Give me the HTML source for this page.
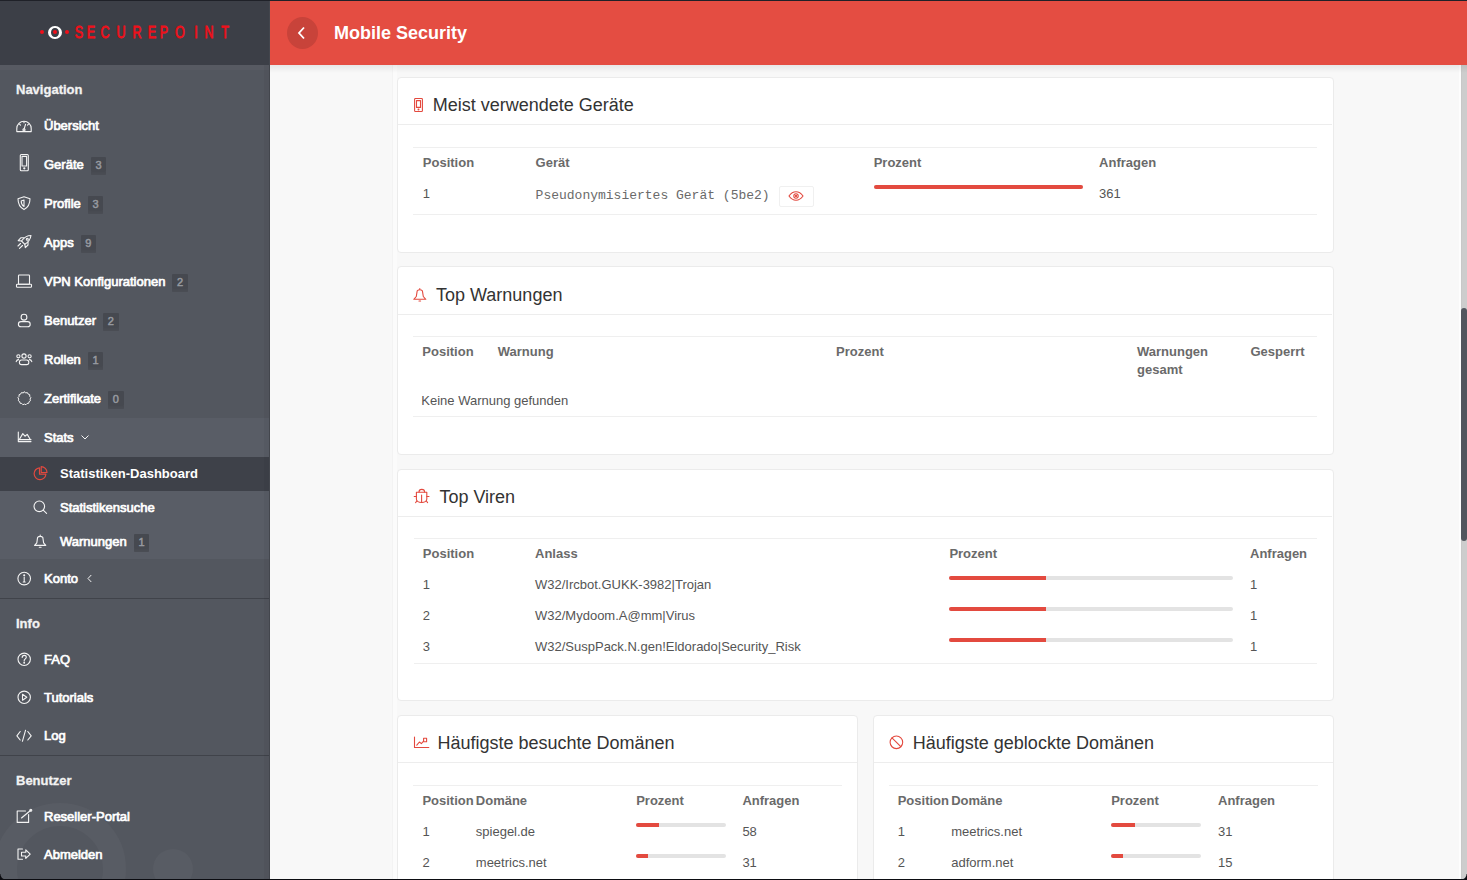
<!DOCTYPE html>
<html><head><meta charset="utf-8"><style>*{box-sizing:border-box;margin:0;padding:0}
html,body{width:1467px;height:880px;overflow:hidden;background:#f8f8f8;font-family:"Liberation Sans",sans-serif}
.abs{position:absolute}
#sb{position:absolute;left:0;top:0;width:270px;height:880px;background:#53575f;overflow:hidden}
#logo{position:absolute;left:0;top:0;width:270px;height:65px;background:#3c3f47}
.lg{position:absolute;top:21.7px;width:30px;text-align:center;font-family:"Liberation Sans",sans-serif;font-size:17px;line-height:22px;color:#f0101a;transform:scaleX(0.74);-webkit-text-stroke:0.8px #f0101a}
.h{position:absolute;left:16px;color:#f2f2f2;font-weight:bold;font-size:13px;line-height:16px;-webkit-text-stroke:0.3px #f2f2f2}
.it{position:absolute;left:0;width:270px;height:39px}
.it .t{position:absolute;left:44px;top:0;line-height:39px;font-size:13px;color:#fff;-webkit-text-stroke:0.7px #fff;white-space:nowrap}
.bd{display:inline-block;vertical-align:top;margin-left:7px;margin-top:11.5px;width:15.5px;height:18px;background:#464950;color:#979aa0;font-size:11px;line-height:17px;text-align:center;-webkit-text-stroke:0.5px #979aa0;border-radius:1px;box-shadow:inset 0 -3px 2px rgba(255,255,255,0.025)}
.sub{position:absolute;left:0;width:270px;height:34px}
.sub .t{position:absolute;left:60px;top:0;line-height:34px;font-size:13px;color:#fff;-webkit-text-stroke:0.7px #fff;white-space:nowrap}
.sub .bd{margin-top:8.5px}
.sub.act .t{font-weight:bold;-webkit-text-stroke:0}
.sep{position:absolute;left:0;width:270px;height:1px;background:#40434a}
#hdr{position:absolute;left:270px;top:0;width:1197px;height:65px;background:#e44d42;z-index:5}
#shd{position:absolute;left:270px;top:65px;width:1197px;height:8px;background:linear-gradient(rgba(0,0,0,0.07),rgba(0,0,0,0));z-index:4}
#top{position:absolute;left:0;top:0;width:1467px;height:1px;background:#1f2128;z-index:20}
#bot{position:absolute;left:0;top:879px;width:1467px;height:1px;background:#0c0d12;z-index:20}
.crn{position:absolute;width:6px;height:6px;z-index:20}
.card{position:absolute;background:#fff;border:1px solid #ebebeb;border-radius:4px}
.ch{position:absolute;left:0;top:0;right:0;height:47px;border-bottom:1px solid #ececec}
.ct{position:absolute;top:16px;font-size:18px;line-height:22px;color:#333;white-space:nowrap}
.tl{position:absolute;height:1px;background:#efefef}
.th{position:absolute;font-size:13px;font-weight:bold;color:#6a6a6a;line-height:18px;white-space:nowrap}
.td{position:absolute;font-size:13px;color:#555;line-height:18px;white-space:nowrap}
.mono{font-family:"Liberation Mono",monospace;color:#6a6a6a}
.bar{position:absolute;height:4px;background:#e3e3e3;border-radius:2px;overflow:hidden}
.bar i{position:absolute;left:0;top:0;height:4px;background:#e34a3f}
.hl{position:absolute;height:1px;background:#ededed}
</style></head><body>
<div id="top"></div><div id="bot"></div><div class="crn" style="left:0;top:874px;background:radial-gradient(circle at 6px 0,rgba(12,13,18,0) 5px,#0c0d12 6px)"></div><div class="crn" style="left:1461px;top:874px;background:radial-gradient(circle at 0 0,rgba(12,13,18,0) 5px,#0c0d12 6px)"></div>
<div id="sb"><div id="logo"><div class="abs" style="left:40px;top:30px;width:4px;height:4px;border-radius:2px;background:#f0101a"></div><div class="abs" style="left:48px;top:25.5px;width:14px;height:13.5px;border-radius:50%;border:2px solid #fff;border-left-width:3.2px;border-right-width:3.2px"></div><div class="abs" style="left:53px;top:30px;width:4px;height:4px;border-radius:2px;background:#f0101a"></div><div class="abs" style="left:65px;top:30px;width:4px;height:4px;border-radius:2px;background:#f0101a"></div><div class="lg" style="left:63.599999999999994px">S</div><div class="lg" style="left:76.2px">E</div><div class="lg" style="left:90.1px">C</div><div class="lg" style="left:105.5px">U</div><div class="lg" style="left:122.30000000000001px">R</div><div class="lg" style="left:137px">E</div><div class="lg" style="left:148.8px">P</div><div class="lg" style="left:165px">O</div><div class="lg" style="left:181px">I</div><div class="lg" style="left:194px">N</div><div class="lg" style="left:209.7px">T</div></div><div class="h" style="top:82px">Navigation</div><div class="it" style="top:106.2px"><span class="t">Übersicht</span></div><div class="it" style="top:145.2px"><span class="t">Geräte<span class="bd">3</span></span></div><div class="it" style="top:184.2px"><span class="t">Profile<span class="bd">3</span></span></div><div class="it" style="top:223.2px"><span class="t">Apps<span class="bd">9</span></span></div><div class="it" style="top:262.2px"><span class="t">VPN Konfigurationen<span class="bd">2</span></span></div><div class="it" style="top:301.2px"><span class="t">Benutzer<span class="bd">2</span></span></div><div class="it" style="top:340.2px"><span class="t">Rollen<span class="bd">1</span></span></div><div class="it" style="top:379.2px"><span class="t">Zertifikate<span class="bd">0</span></span></div><div class="abs" style="left:0;top:418.2px;width:270px;height:141px;background:#595d66"></div><div class="it" style="top:418.2px"><span class="t">Stats</span></div><div class="abs" style="left:0;top:457.2px;width:270px;height:34px;background:#3e4149"></div><div class="sub act" style="top:457.2px"><span class="t">Statistiken-Dashboard</span></div><div class="sub" style="top:491.2px"><span class="t">Statistikensuche</span></div><div class="sub" style="top:525.2px"><span class="t">Warnungen<span class="bd">1</span></span></div><div class="it" style="top:559.2px"><span class="t">Konto</span></div><div class="sep" style="top:598.2px"></div><div class="h" style="top:615.5px">Info</div><div class="it" style="top:639.6px"><span class="t">FAQ</span></div><div class="it" style="top:677.8000000000001px"><span class="t">Tutorials</span></div><div class="it" style="top:716.0px"><span class="t">Log</span></div><div class="sep" style="top:755px"></div><div class="h" style="top:772.5px">Benutzer</div><div class="it" style="top:797.0px"><span class="t">Reseller-Portal</span></div><div class="it" style="top:835.2px"><span class="t">Abmelden</span></div><div class="abs" style="left:-6px;top:803px;width:132px;height:132px;border-radius:50%;border:23px solid rgba(255,255,255,0.03)"></div><div class="abs" style="left:153px;top:849px;width:40px;height:40px;border-radius:50%;background:rgba(255,255,255,0.03)"></div><div class="abs" style="left:0;top:65px;width:270px;height:5px;background:rgba(255,255,255,0.025)"></div><div class="abs" style="left:264px;top:65px;width:5px;height:815px;background:rgba(0,0,0,0.035)"></div><svg class="abs" style="left:0;top:0" width="270" height="880" viewBox="0 0 270 880" fill="none" stroke="#f4f4f4" stroke-width="1.1" stroke-linejoin="round" stroke-linecap="round">
<path d="M16.8 131.6 L16.8 128.4 A7.2 7.2 0 0 1 31.2 128.4 L31.2 131.6 Z"/>
<path d="M24 129.5 L25.6 124.2"/><circle cx="24" cy="129.8" r="1.1"/>
<path d="M19.5 124.2 L20.5 125.2 M28.5 124.2 L27.5 125.2 M24 121.5 L24 122.8"/>
<rect x="20.3" y="154.5" width="8" height="16.3" rx="1"/>
<rect x="22" y="156.4" width="4.6" height="9.6"/><circle cx="24.3" cy="168.3" r="0.6"/>
<path d="M24 196.8 L30 198.8 C30 204.5 27.5 207.8 24 209.6 C20.5 207.8 18 204.5 18 198.8 Z"/>
<path d="M24 200 L24 206.5 C22.3 205.5 21.2 203.5 21.2 201 Z"/>
<path d="M31 235.5 C27 235.5 24 237.5 21.5 241 L24.8 244.3 C28.5 242 30.5 239 31 235.5 Z"/>
<path d="M21.5 241 L18.2 240.6 L20.8 237.8 L24 237.8 M24.8 244.3 L25.3 247.6 L28 245 L28 242"/>
<path d="M20.5 243.5 L18 246 M22.5 245.5 L19.5 248.3"/><circle cx="27.3" cy="239.2" r="1"/>
<rect x="18.5" y="275" width="11" height="9.3" rx="0.8"/>
<rect x="16.5" y="284.3" width="15" height="3" rx="0.8"/>
<circle cx="24" cy="317.2" r="2.9"/>
<rect x="18.4" y="321.6" width="11.8" height="5.2" rx="2.6"/>
<circle cx="24" cy="356" r="2.1"/><circle cx="18.4" cy="356.3" r="1.6"/><circle cx="29.6" cy="356.3" r="1.6"/>
<rect x="19.4" y="360" width="9.4" height="4.6" rx="2.2"/>
<path d="M16.2 361.6 C16.6 360.2 17.4 359.6 18.6 359.6 M31.8 361.6 C31.4 360.2 30.6 359.6 29.4 359.6"/>
<path d="M24.40 391.90 L25.76 392.87 L27.42 392.64 L28.18 394.13 L29.75 394.71 L29.73 396.38 L30.85 397.62 L30.06 399.09 L30.48 400.70 L29.09 401.64 L28.71 403.27 L27.05 403.45 L25.96 404.71 L24.40 404.10 L22.84 404.71 L21.75 403.45 L20.09 403.27 L19.71 401.64 L18.32 400.70 L18.74 399.09 L17.95 397.62 L19.07 396.38 L19.05 394.71 L20.62 394.13 L21.38 392.64 L23.04 392.87 Z" stroke-width="1"/>
<path d="M18.3 432 L18.3 441.6 L31 441.6 M18.3 439.6 L31 439.6"/><path d="M19.6 439 L22.8 433.6 L25 436.2 L27.2 434.4 L30 439"/>
<path d="M81.8 435.8 L85 439 L88.2 435.8" stroke-width="1"/><path d="M91 575.3 L88 578.5 L91 581.7" stroke-width="1"/>
<g stroke="#e2493f" stroke-width="1.2"><path d="M39.5 467.8 A5.9 5.9 0 1 0 45.9 474.2 L39.5 474.2 Z"/><path d="M41.2 466.7 A5.8 5.8 0 0 1 47 472.5 L41.2 472.5 Z"/></g>
<circle cx="39.3" cy="506.3" r="5.3"/><path d="M43.2 510.2 L46.6 513.4"/>
<path d="M40.2 535 L40.2 535.8 M37.6 537.4 C38.4 536.6 39.4 536.4 40.2 536.4 C41 536.4 42 536.6 42.8 537.4 L43.6 542.8 L45.8 545.4 L34.6 545.4 L36.8 542.8 Z"/><path d="M39.3 547.2 L41.1 547.2"/>
<circle cx="24.2" cy="578.6" r="6.3"/><path d="M24.2 577 L24.2 582 M23.2 582 L25.2 582"/><circle cx="24.2" cy="575.2" r="0.5"/>
<circle cx="24.2" cy="659.3" r="6.2"/><path d="M22.2 657.5 C22.2 656 23 655.4 24.2 655.4 C25.5 655.4 26.3 656.2 26.3 657.3 C26.3 658.8 24.2 659 24.2 660.6 L24.2 661"/><circle cx="24.2" cy="662.8" r="0.4"/>
<circle cx="24.2" cy="697.3" r="6.2"/><path d="M22.5 694.3 L22.5 700.3 L26.8 697.3 Z"/>
<path d="M20.2 731.5 L16.9 735.8 L20.2 740 M27.8 731.5 L31.2 735.8 L27.8 740 M25.6 730.2 L22.4 741.3"/>
<path d="M25.5 811 L17.2 811 L17.2 822.4 L28.6 822.4 L28.6 814.5"/><path d="M21.5 818 L30.5 810.5"/><circle cx="30.8" cy="810.3" r="1"/>
<path d="M22.5 849 L18 849 L18 859.2 L22.5 859.2"/><path d="M21.5 852.2 L25.8 852.2 L25.8 849.8 L30.2 854.1 L25.8 858.4 L25.8 856 L21.5 856 Z"/>
</svg>
</div>
<div id="hdr"><div class="abs" style="left:16.5px;top:17px;width:31px;height:32px;border-radius:50%;background:#c8433a"></div><svg class="abs" style="left:26px;top:25px" width="12" height="16" viewBox="0 0 12 16"><path d="M8 2.5 L3 8 L8 13.5" fill="none" stroke="#fff" stroke-width="1.8"/></svg><div class="abs" style="left:64px;top:22px;font-size:18px;line-height:22px;font-weight:bold;color:#fff">Mobile Security</div></div>
<div id="shd"></div>
<div class="abs" style="left:269px;top:0;width:1px;height:880px;background:#43464d;z-index:6"></div>
<div class="card" style="left:397px;top:77px;width:937px;height:176px"></div>
<div class="hl" style="left:398px;top:124px;width:934px"></div>
<div class="ct" style="left:432.7px;top:93.5px">Meist verwendete Geräte</div>
<div class="tl" style="left:413px;top:146.5px;width:904px"></div>
<div class="th" style="left:422.8px;top:154.1px">Position</div>
<div class="th" style="left:535.6px;top:154.1px">Gerät</div>
<div class="th" style="left:873.7px;top:154.1px">Prozent</div>
<div class="th" style="left:1099.1px;top:154.1px">Anfragen</div>
<div class="td" style="left:422.8px;top:185.1px">1</div>
<div class="td mono" style="left:535.6px;top:187.1px">Pseudonymisiertes Gerät (5be2)</div>
<div class="abs" style="left:778.5px;top:185.5px;width:35px;height:21px;border:1px solid #f0f0f0;border-radius:2px"></div>
<svg class="abs" style="left:788px;top:191px" width="16" height="10" viewBox="0 0 16 10" fill="none" stroke="#e2493f" stroke-width="1.1"><path d="M1 5 C3.5 1.5 6 0.8 8 0.8 C10 0.8 12.5 1.5 15 5 C12.5 8.5 10 9.2 8 9.2 C6 9.2 3.5 8.5 1 5 Z"/><circle cx="8" cy="5" r="2.2"/><circle cx="8" cy="5" r="0.6" fill="#e2493f"/></svg>
<div class="bar" style="left:873.7px;top:184.9px;width:209.70000000000005px"><i style="width:209.70000000000005px"></i></div>
<div class="td" style="left:1099.1px;top:185.1px">361</div>
<div class="tl" style="left:413px;top:214px;width:904px"></div>
<div class="card" style="left:397px;top:266px;width:937px;height:189px"></div>
<div class="hl" style="left:398px;top:314px;width:934px"></div>
<div class="ct" style="left:436px;top:284.0px">Top Warnungen</div>
<div class="tl" style="left:413px;top:336.2px;width:904px"></div>
<div class="th" style="left:422.3px;top:343.4px">Position</div>
<div class="th" style="left:497.8px;top:343.4px">Warnung</div>
<div class="th" style="left:836.1px;top:343.4px">Prozent</div>
<div class="th" style="left:1137px;top:343.4px">Warnungen</div>
<div class="th" style="left:1250.4px;top:343.4px">Gesperrt</div>
<div class="th" style="left:1137px;top:361.4px">gesamt</div>
<div class="td" style="left:421.3px;top:392.4px">Keine Warnung gefunden</div>
<div class="tl" style="left:413px;top:416px;width:904px"></div>
<div class="card" style="left:397px;top:469px;width:937px;height:232px"></div>
<div class="hl" style="left:398px;top:516px;width:934px"></div>
<div class="ct" style="left:439.4px;top:486.2px">Top Viren</div>
<div class="tl" style="left:414px;top:538.3px;width:903px"></div>
<div class="th" style="left:422.8px;top:545.4px">Position</div>
<div class="th" style="left:535px;top:545.4px">Anlass</div>
<div class="th" style="left:949.4px;top:545.4px">Prozent</div>
<div class="th" style="left:1250px;top:545.4px">Anfragen</div>
<div class="td" style="left:422.8px;top:576.2px">1</div>
<div class="td" style="left:535px;top:576.2px">W32/Ircbot.GUKK-3982|Trojan</div>
<div class="bar" style="left:949.4px;top:576px;width:283.9px"><i style="width:96.50000000000011px"></i></div>
<div class="td" style="left:1250px;top:576.2px">1</div>
<div class="td" style="left:422.8px;top:607.2px">2</div>
<div class="td" style="left:535px;top:607.2px">W32/Mydoom.A@mm|Virus</div>
<div class="bar" style="left:949.4px;top:607px;width:283.9px"><i style="width:96.50000000000011px"></i></div>
<div class="td" style="left:1250px;top:607.2px">1</div>
<div class="td" style="left:422.8px;top:638.2px">3</div>
<div class="td" style="left:535px;top:638.2px">W32/SuspPack.N.gen!Eldorado|Security_Risk</div>
<div class="bar" style="left:949.4px;top:638px;width:283.9px"><i style="width:96.50000000000011px"></i></div>
<div class="td" style="left:1250px;top:638.2px">1</div>
<div class="tl" style="left:414px;top:663px;width:903px"></div>
<div class="card" style="left:397px;top:715px;width:461px;height:200px"></div>
<div class="hl" style="left:398px;top:762px;width:459px"></div>
<div class="ct" style="left:437.4px;top:731.5px">Häufigste besuchte Domänen</div>
<div class="tl" style="left:413px;top:784.7px;width:429px"></div>
<div class="th" style="left:422.4px;top:792.0px">Position</div>
<div class="th" style="left:475.8px;top:792.0px">Domäne</div>
<div class="th" style="left:636.2px;top:792.0px">Prozent</div>
<div class="th" style="left:742.4px;top:792.0px">Anfragen</div>
<div class="td" style="left:422.4px;top:822.7px">1</div>
<div class="td" style="left:475.8px;top:822.7px">spiegel.de</div>
<div class="bar" style="left:636.2px;top:822.5px;width:89.5px"><i style="width:22.699999999999932px"></i></div>
<div class="td" style="left:742.4px;top:822.7px">58</div>
<div class="td" style="left:422.4px;top:853.7px">2</div>
<div class="td" style="left:475.8px;top:853.7px">meetrics.net</div>
<div class="bar" style="left:636.2px;top:853.5px;width:89.5px"><i style="width:11.599999999999909px"></i></div>
<div class="td" style="left:742.4px;top:853.7px">31</div>
<div class="card" style="left:873px;top:715px;width:461px;height:200px"></div>
<div class="hl" style="left:874px;top:762px;width:459px"></div>
<div class="ct" style="left:912.8px;top:731.5px">Häufigste geblockte Domänen</div>
<div class="tl" style="left:889px;top:784.7px;width:429px"></div>
<div class="th" style="left:897.7px;top:792.0px">Position</div>
<div class="th" style="left:951.2px;top:792.0px">Domäne</div>
<div class="th" style="left:1111.2px;top:792.0px">Prozent</div>
<div class="th" style="left:1218px;top:792.0px">Anfragen</div>
<div class="td" style="left:897.7px;top:822.7px">1</div>
<div class="td" style="left:951.2px;top:822.7px">meetrics.net</div>
<div class="bar" style="left:1111.2px;top:822.5px;width:90.09999999999991px"><i style="width:23.700000000000045px"></i></div>
<div class="td" style="left:1218px;top:822.7px">31</div>
<div class="td" style="left:897.7px;top:853.7px">2</div>
<div class="td" style="left:951.2px;top:853.7px">adform.net</div>
<div class="bar" style="left:1111.2px;top:853.5px;width:90.09999999999991px"><i style="width:11.700000000000045px"></i></div>
<div class="td" style="left:1218px;top:853.7px">15</div>
<svg class="abs" style="left:0;top:0" width="1467" height="880" viewBox="0 0 1467 880" fill="none" stroke="#e3493e" stroke-width="1.1" stroke-linejoin="round" stroke-linecap="round">
<rect x="414.6" y="98.5" width="7.8" height="13" rx="0.8"/><rect x="416.5" y="100.6" width="4" height="6.8"/><circle cx="418.5" cy="109.5" r="0.45"/>
<path d="M419.8 288.6 L419.8 289.2 M417.2 290.8 C418 290 419 289.8 419.8 289.8 C420.6 289.8 421.6 290 422.4 290.8 L423.3 296.5 L425.8 299.3 L413.8 299.3 L416.3 296.5 Z"/><path d="M419 301 L420.6 301"/>
<path d="M419 492 C419 490.2 420 489.4 421.8 489.4 C423.6 489.4 424.6 490.2 424.6 492"/><path d="M416.4 492.3 L426.8 492.3 L426.8 499 C426.8 501 424.5 502.5 421.6 502.5 C418.7 502.5 416.4 501 416.4 499 Z"/><path d="M421.6 495 L421.6 502.3 M414.2 496.5 L416.4 496.5 M426.8 496.5 L429 496.5 M416.8 501 L415.6 502.6 M426.4 501 L427.6 502.6"/>
<path d="M414.5 737 L414.5 747.5 L428.8 747.5"/><path d="M416.8 745.2 L419.4 742 L421.4 743.6 L423.6 741"/><rect x="423.6" y="738.2" width="3" height="3.5"/>
<circle cx="896.4" cy="742.3" r="6.3"/><path d="M892 737.9 L900.8 746.7"/>
</svg>
<div class="abs" style="left:392px;top:65px;width:5px;height:815px;background:#fbfbfb;border-left:1px solid #f3f3f3"></div>
<div class="abs" style="left:1459px;top:65px;width:2px;height:815px;background:#fdfdfd"></div>
<div class="abs" style="left:1461px;top:65px;width:6px;height:815px;background:#cdcdcd;border-left:1px solid #c8c8c8"></div>
<div class="abs" style="left:1461px;top:308px;width:6px;height:233px;background:#52565e;border-radius:3px"></div>
</body></html>
